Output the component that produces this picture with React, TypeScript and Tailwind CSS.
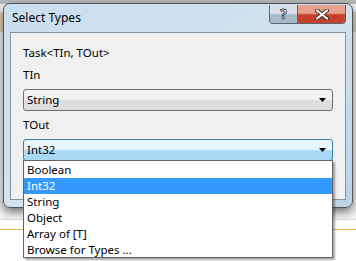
const font = "font-['Segoe_UI','Noto_Sans','Liberation_Sans',sans-serif]";

function Arrow() {
  return (
    <svg width="7" height="4" viewBox="0 0 7 4" className="shrink-0">
      <path d="M0 0h7L3.5 4z" fill="#000" />
    </svg>
  );
}

function Combo({ value, active }: { value: string; active?: boolean }) {
  return (
    <div
      className={
        active
          ? "h-[22px] flex items-center justify-between pl-[3px] pr-[6px] rounded-[3px] border border-[#3c7fb1] bg-gradient-to-b from-[#eaf6fd] from-45% to-[#a7d9f5] to-55%"
          : "h-[22px] flex items-center justify-between pl-[3px] pr-[6px] rounded-[3px] border border-[#707070] bg-gradient-to-b from-[#f2f2f2] from-45% to-[#dddddd] to-55%"
      }
    >
      <span className="text-[11.5px] text-black leading-none">{value}</span>
      <Arrow />
    </div>
  );
}

const items = ["Boolean", "Int32", "String", "Object", "Array of [T]", "Browse for Types ..."];

export default function App() {
  return (
    <div className={`relative w-[356px] h-[261px] overflow-hidden bg-white ${font}`}>
      {/* app behind the dialog */}
      <div className="flex flex-col">
        <div className="h-[4px] bg-[#b8b8b8]" />
        <div className="h-[8px] bg-[#f0f0f0]" />
        <div className="h-[20px] bg-[#e3d3ae]" />
        <div className="h-[188px] bg-[#f4f4f4] border-b border-[#d8dde2]" />
        <div className="h-[9px]" />
        <div className="h-px bg-[#e8b64a]" />
      </div>

      {/* dialog window */}
      <div className="absolute left-[3px] top-[3px] w-[350px] h-[205px] rounded-[7px] border border-[#4d5560] bg-gradient-to-br from-[#c9def0] via-[#d3e3ee] to-[#bcd2e4] shadow-[0_4px_10px_rgba(0,0,0,0.55)] flex flex-col">
        <div className="h-[28px] flex items-start justify-between pl-[8px] pr-[6px]">
          <span className="mt-[6px] text-[12px] text-black leading-[16px]">Select Types</span>
          <div className="mt-[1px] flex h-[19px] rounded-b-[4px] border border-t-0 border-[#5b6470] overflow-hidden">
            <div className="w-[28px] flex items-center justify-center bg-gradient-to-b from-[#d9e2ea] from-45% to-[#a9b9c7] to-55% border-r border-[#5b6470]">
              <span className="text-[14px] font-bold text-[#f2f2f2] [-webkit-text-stroke:0.8px_#3a3f45] leading-none">?</span>
            </div>
            <div className="w-[47px] flex items-center justify-center bg-gradient-to-b from-[#e8a08e] from-45% to-[#c5402a] to-55%">
              <svg width="14" height="11" viewBox="0 0 14 11">
                <path d="M2 1.5l10 8M12 1.5l-10 8" stroke="#3a2a28" strokeWidth="4" strokeLinecap="round" />
                <path d="M2 1.5l10 8M12 1.5l-10 8" stroke="#fff" strokeWidth="2.2" strokeLinecap="round" />
              </svg>
            </div>
          </div>
        </div>
        <div className="mx-[6px] h-[168px] border border-[#8594a3] bg-[#f0f0f0] px-[12px] pt-[12px] flex flex-col gap-[6px]">
          <div className="text-[11.5px] text-black leading-[16px]">Task&lt;TIn, TOut&gt;</div>
          <div className="text-[11.5px] text-black leading-[16px]">TIn</div>
          <Combo value="String" />
          <div className="text-[11.5px] text-black leading-[16px]">TOut</div>
          <Combo value="Int32" active />
        </div>
      </div>

      {/* open dropdown list */}
      <div className="absolute left-[23px] top-[160px] w-[310px] h-[98px] bg-white border border-[#646464] shadow-[2px_2px_2px_rgba(0,0,0,0.35)] py-px flex flex-col">
        {items.map((it) => (
          <div
            key={it}
            className={
              it === "Int32"
                ? "h-[16px] pl-[3px] flex items-center bg-[#3399ff] text-white text-[11.5px]"
                : "h-[16px] pl-[3px] flex items-center text-black text-[11.5px]"
            }
          >
            {it}
          </div>
        ))}
      </div>
    </div>
  );
}
